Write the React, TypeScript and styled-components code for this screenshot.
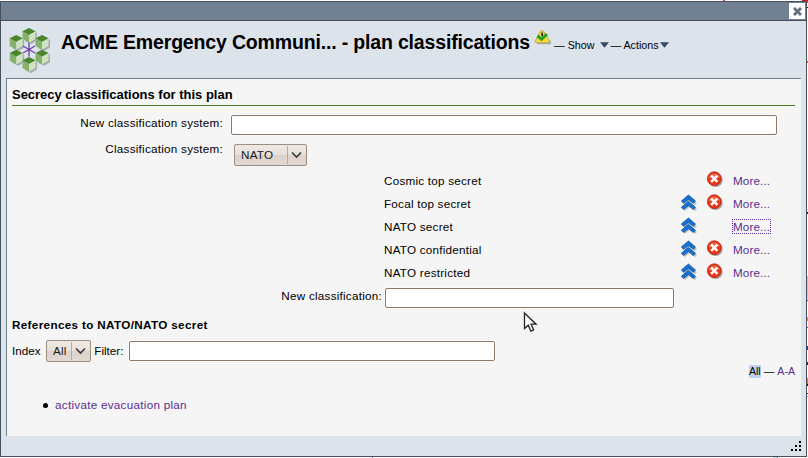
import React from "react";
import styled, { createGlobalStyle } from "styled-components";

const Global = createGlobalStyle`
  * { box-sizing: border-box; }
  body { margin: 0; background: #fff; overflow: hidden; }
`;

const Page = styled.div`
  position: relative;
  width: 808px;
  height: 458px;
  padding-top: 1px;
  background: #fff;
  font: 11.7px/14px "Liberation Sans", Arial, sans-serif;
  color: #000;
`;

/* Slivers of the document that stay visible around the dialog. */
const Sliver = styled.i<{ $x: number; $y: number; $w: number; $h: number; $c: string }>`
  position: absolute;
  left: ${(p) => p.$x}px;
  top: ${(p) => p.$y}px;
  width: ${(p) => p.$w}px;
  height: ${(p) => p.$h}px;
  background: ${(p) => p.$c};
`;

const Dialog = styled.section`
  display: flex;
  flex-direction: column;
  width: 807px;
  height: 456px;
  border: 1px solid #45505f;
  background: #dce3eb;
`;

const TitleBar = styled.div`
  display: flex;
  justify-content: flex-end;
  height: 19px;
  padding: 1px 1px 0 0;
  background: #728191;
  border-bottom: 1px solid #45505f;
`;

const CloseButton = styled.button`
  display: flex;
  align-items: center;
  justify-content: center;
  width: 16px;
  height: 16px;
  padding: 0;
  border: 0;
  background: #fff;
`;

const Header = styled.header`
  display: flex;
  align-items: flex-start;
  height: 57px;
  padding: 6px 0 0 8px;
`;

const Title = styled.h1`
  margin: 4px 0 0 10px;
  width: 473px;
  font-size: 19.5px;
  letter-spacing: -0.165px;
  line-height: 22px;
  white-space: nowrap;
`;

const MenuLink = styled.span<{ $gap: number; $left: number }>`
  display: flex;
  align-items: center;
  gap: ${(p) => p.$gap}px;
  margin: 11px 0 0 ${(p) => p.$left}px;
  font-size: 10.7px;
  white-space: pre;
`;

const Panel = styled.main`
  width: 795px;
  height: 358px;
  margin-left: 5px;
  padding: 0 6px 0 5px;
  background: #f5f5f5;
  border: solid #6f7f86;
  border-width: 1px 0 0 1px;
`;

const Heading = styled.h2<{ $ruled?: boolean }>`
  margin: 0;
  height: ${(p) => (p.$ruled ? 27 : 20)}px;
  padding-top: ${(p) => (p.$ruled ? 9 : 3)}px;
  font-size: ${(p) => (p.$ruled ? 12.98 : 11.7)}px;
  letter-spacing: ${(p) => (p.$ruled ? 0 : 0.34)}px;
  border-bottom: ${(p) => (p.$ruled ? "1px solid #4d7a26" : "0")};
`;

const Row = styled.div<{ $h: number }>`
  display: flex;
  align-items: flex-start;
  height: ${(p) => p.$h}px;
  white-space: nowrap;
`;

const Label = styled.label<{ $w: number; $top: number; $gap: number }>`
  width: ${(p) => p.$w}px;
  margin: ${(p) => p.$top}px ${(p) => p.$gap}px 0 0;
  text-align: right;
  letter-spacing: 0.24px;
  white-space: nowrap;
`;

const InlineLabel = styled.label<{ $w: number }>`
  width: ${(p) => p.$w}px;
  margin-top: 9px;
`;

const Field = styled.input<{ $w: number; $top: number }>`
  width: ${(p) => p.$w}px;
  height: 20px;
  margin: ${(p) => p.$top}px 0 0;
  padding: 0 3px;
  border: 1px solid #8b7868;
  border-radius: 2px;
  background: #fff;
  box-shadow: 0 0 0 1px #fafafa;
  outline: none;
`;

const Select = styled.button<{ $w: number; $top: number }>`
  display: flex;
  align-items: center;
  justify-content: space-between;
  width: ${(p) => p.$w}px;
  height: 22px;
  margin: ${(p) => p.$top}px 0 0;
  padding: 0 0 0 6px;
  border: 1px solid #9d8d80;
  border-radius: 2px;
  background: linear-gradient(#efe9e4 0, #e8e0da 50%, #ddd2ca 50%, #e2d9d2 100%);
  font: inherit;
  letter-spacing: 0.2px;
  color: #1a1a1a;
`;

const Arrow = styled.span`
  display: flex;
  align-items: center;
  width: 19px;
  height: 18px;
  padding-left: 3px;
  border-left: 1px solid #b8aaa0;
`;

const ClassRow = styled.div`
  display: grid;
  grid-template-columns: 297px 26px 26px auto;
  height: 23px;
  margin-left: 372px;
`;

const Cell = styled.span`
  padding-top: 4px;
  letter-spacing: 0.23px;
`;

const IconCell = styled.span`
  height: 18px;
  padding-top: 1px;
`;

const Link = styled.a<{ $focus?: boolean }>`
  color: #5a2d91;
  text-decoration: none;
  outline: ${(p) => (p.$focus ? "1px dotted #5a2d91" : "none")};
`;

const MoreLink = styled(Link)`
  letter-spacing: 0.12px;
`;

const Pager = styled.nav`
  display: flex;
  justify-content: flex-end;
  gap: 3px;
  height: 30px;
  padding: 1px 0 0;
  font-size: 10.6px;
  line-height: 13px;
`;

const Current = styled.span`
  height: 13px;
  background: #bdd3f5;
`;

const List = styled.ul`
  margin: 4px 0 0;
  padding: 0 0 0 31px;
  list-style: none;
`;

const Item = styled.li`
  display: flex;
  align-items: center;
  gap: 7px;
  letter-spacing: 0.27px;

  &::before {
    content: "";
    width: 5px;
    height: 5px;
    border-radius: 50%;
    background: #000;
  }
`;

const Footer = styled.footer`
  display: flex;
  justify-content: flex-end;
  padding: 5px 5px 0 0;
`;

const Pointer = styled.svg`
  position: absolute;
  left: 523px;
  top: 311px;
`;

const cubes = [[20, 1], [7.2, 8], [33, 8], [7.2, 22.8], [33, 22.8], [20, 30]];

const Logo = () => (
  <svg width="42" height="46" viewBox="0 0 42 46">
    {cubes.map(([x, y]) => (
      <path key={`${x}-${y}`} transform={`translate(${x} ${y})`} d="M2 2l6 3v7.5l-6 3.5-6-3z" fill="#7f8985" opacity=".6" />
    ))}
    {cubes.map(([x, y]) => (
      <g key={`${x}-${y}`} transform={`translate(${x} ${y})`}>
        <path d="M-6.5 3v8L0 14.5V6.5z" fill="#86b26e" />
        <path d="M6.5 3v8L0 14.5V6.5z" fill="#cfe3c0" />
        <path d="M0 0l6.5 3.2L0 6.8l-6.5-3.6z" fill="#4a852b" />
      </g>
    ))}
    <path d="M20 15.500v14M14 19l12 7M26 19l-12 7" stroke="#6a3fa8" strokeWidth="1.300" />
  </svg>
);

const Warning = () => (
  <svg width="17" height="19" viewBox="0 0 17 19">
    <path d="M3 16.500h14l-1.500-3" fill="none" stroke="#8d9391" strokeWidth="1.500" opacity=".7" />
    <path d="M6 4.800c1-1.500 3-1.500 4 0l5.500 9.200c.4 1.300-.3 1.700-1.500 1.700H2.500c-1.500 0-1.700-1-1.200-1.900z" fill="#f3dc3c" stroke="#b39a2c" strokeWidth=".8" />
    <path d="M3.500 8.800l4 3.400 5.500-5" fill="none" stroke="#2aa02a" strokeWidth="3" />
    <path d="M7.300 5.500h1.700v3.500H7.300z" fill="#222" />
  </svg>
);

const Triangle = () => (
  <svg width="9" height="6" viewBox="0 0 9 6"><path d="M0 .3h9L4.500 5.800z" fill="#344863" /></svg>
);

const Chevron = () => (
  <svg width="11" height="8" viewBox="0 0 11 8"><path d="M1 1.500l4.500 4.500L10 1.500" fill="none" stroke="#3a3a3a" strokeWidth="1.700" /></svg>
);

const Up = () => (
  <svg width="16" height="17" viewBox="0 0 16 17">
    <path d="M2 8.500l6.500-5L16 9l-2 2-5.500-4L4 11zM2 15l6.500-6L16 15l-2 2-5.500-4L4 17z" fill="#999" opacity=".6" />
    <path d="M7.500 1l7 6-2.200 2.200-4.800-3.800-5 3.800L.3 7z" fill="#1673d6" stroke="#0b4896" strokeWidth=".7" />
    <path d="M7.500 7.200l7 6-2.200 2.200-4.800-3.800-5 3.800-2.200-2.200z" fill="#1673d6" stroke="#0b4896" strokeWidth=".7" />
  </svg>
);

const Remove = () => (
  <svg width="17" height="17" viewBox="0 0 17 17">
    <circle cx="8.600" cy="9" r="7.100" fill="#777" opacity=".65" />
    <circle cx="7.300" cy="7.700" r="6.900" fill="#e8371a" stroke="#b92212" strokeWidth=".8" />
    <path d="M1.500 7a5.900 5.900 0 0 1 11.500 0C9 5 6 8 1.500 7z" fill="#f28470" opacity=".6" />
    <path d="M4.200 4.600l6.200 6.200M10.400 4.600l-6.200 6.200" stroke="#fff" strokeWidth="2.500" />
  </svg>
);

const levels = [
  { name: "Cosmic top secret", up: false, remove: true, focus: false },
  { name: "Focal top secret", up: true, remove: true, focus: false },
  { name: "NATO secret", up: true, remove: false, focus: true },
  { name: "NATO confidential", up: true, remove: true, focus: false },
  { name: "NATO restricted", up: true, remove: true, focus: false },
];

const slivers: [number, number, number, number, string][] = [
  [723, 0, 2, 1, "#d8414a"],
  [802, 0, 6, 1, "#d40f14"],
  [807, 1, 1, 2, "#e04040"],
  [807, 7, 1, 1, "#222"],
  [807, 61, 1, 2, "#e0525c"],
  [807, 212, 1, 2, "#222"],
  [807, 276, 1, 18, "#c9c3c3"],
  [807, 294, 1, 6, "#c6d2ec"],
  [807, 300, 1, 1, "#556"],
  [807, 317, 1, 4, "#dc9a3a"],
  [807, 327, 1, 1, "#557040"],
  [807, 346, 1, 4, "#27457a"],
  [807, 362, 1, 3, "#222"],
  [807, 378, 1, 6, "#c98425"],
  [807, 384, 1, 2, "#111"],
  [807, 393, 1, 1, "#334"],
  [807, 396, 1, 1, "#8fc4e0"],
  [372, 457, 1, 1, "#777"],
  [773, 457, 4, 1, "#c5d6ea"],
  [777, 457, 1, 1, "#666f7a"],
];

export default function App() {
  return (
    <Page>
      <Global />
      {slivers.map(([x, y, w, h, c]) => (
        <Sliver key={`${x}-${y}`} $x={x} $y={y} $w={w} $h={h} $c={c} />
      ))}
      <Dialog>
        <TitleBar>
          <CloseButton aria-label="Close">
            <svg width="9" height="9" viewBox="0 0 9 9"><path d="M1 1l7 7M8 1L1 8" stroke="#66717c" strokeWidth="2.900" /></svg>
          </CloseButton>
        </TitleBar>
        <Header>
          <Logo />
          <Title>ACME Emergency Communi... - plan classifications</Title>
          <Warning />
          <MenuLink $gap={6} $left={3}>— Show<Triangle /></MenuLink>
          <MenuLink $gap={1} $left={1}>— Actions<Triangle /></MenuLink>
        </Header>
        <Panel>
          <Heading $ruled>Secrecy classifications for this plan</Heading>
          <Row $h={34}>
            <Label $w={211} $top={10} $gap={8}>New classification system:</Label>
            <Field $w={546} $top={9} />
          </Row>
          <Row $h={30}>
            <Label $w={211} $top={2} $gap={11}>Classification system:</Label>
            <Select $w={73} $top={4}>NATO<Arrow><Chevron /></Arrow></Select>
          </Row>
          {levels.map((l) => (
            <ClassRow key={l.name}>
              <Cell>{l.name}</Cell>
              <IconCell>{l.up && <Up />}</IconCell>
              <IconCell>{l.remove && <Remove />}</IconCell>
              <Cell><MoreLink $focus={l.focus}>More...</MoreLink></Cell>
            </ClassRow>
          ))}
          <Row $h={30}>
            <Label $w={370} $top={4} $gap={3}>New classification:</Label>
            <Field $w={289} $top={3} />
          </Row>
          <Heading>References to NATO/NATO secret</Heading>
          <Row $h={29}>
            <InlineLabel $w={34}>Index</InlineLabel>
            <Select $w={45} $top={5}>All<Arrow><Chevron /></Arrow></Select>
            <InlineLabel $w={38}>&nbsp;Filter:</InlineLabel>
            <Field $w={366} $top={6} />
          </Row>
          <Pager><Current>All</Current><span>—</span><Link>A-A</Link></Pager>
          <List><Item><Link>activate evacuation plan</Link></Item></List>
        </Panel>
        <Footer>
          <svg width="10" height="10" viewBox="0 0 10 10">
            <path d="M8 0h2v2H8zM4 4h2v2H4zM8 4h2v2H8zM0 8h2v2H0zM4 8h2v2H4zM8 8h2v2H8z" fill="#000" />
          </svg>
        </Footer>
      </Dialog>
      <Pointer width="16" height="23" viewBox="0 0 16 23">
        <path d="M1.500 2v15.500l3.800-3.300 2.500 6 2.800-1.200-2.500-5.800h5z" fill="#fff" stroke="#222" strokeWidth="1.300" />
      </Pointer>
    </Page>
  );
}
